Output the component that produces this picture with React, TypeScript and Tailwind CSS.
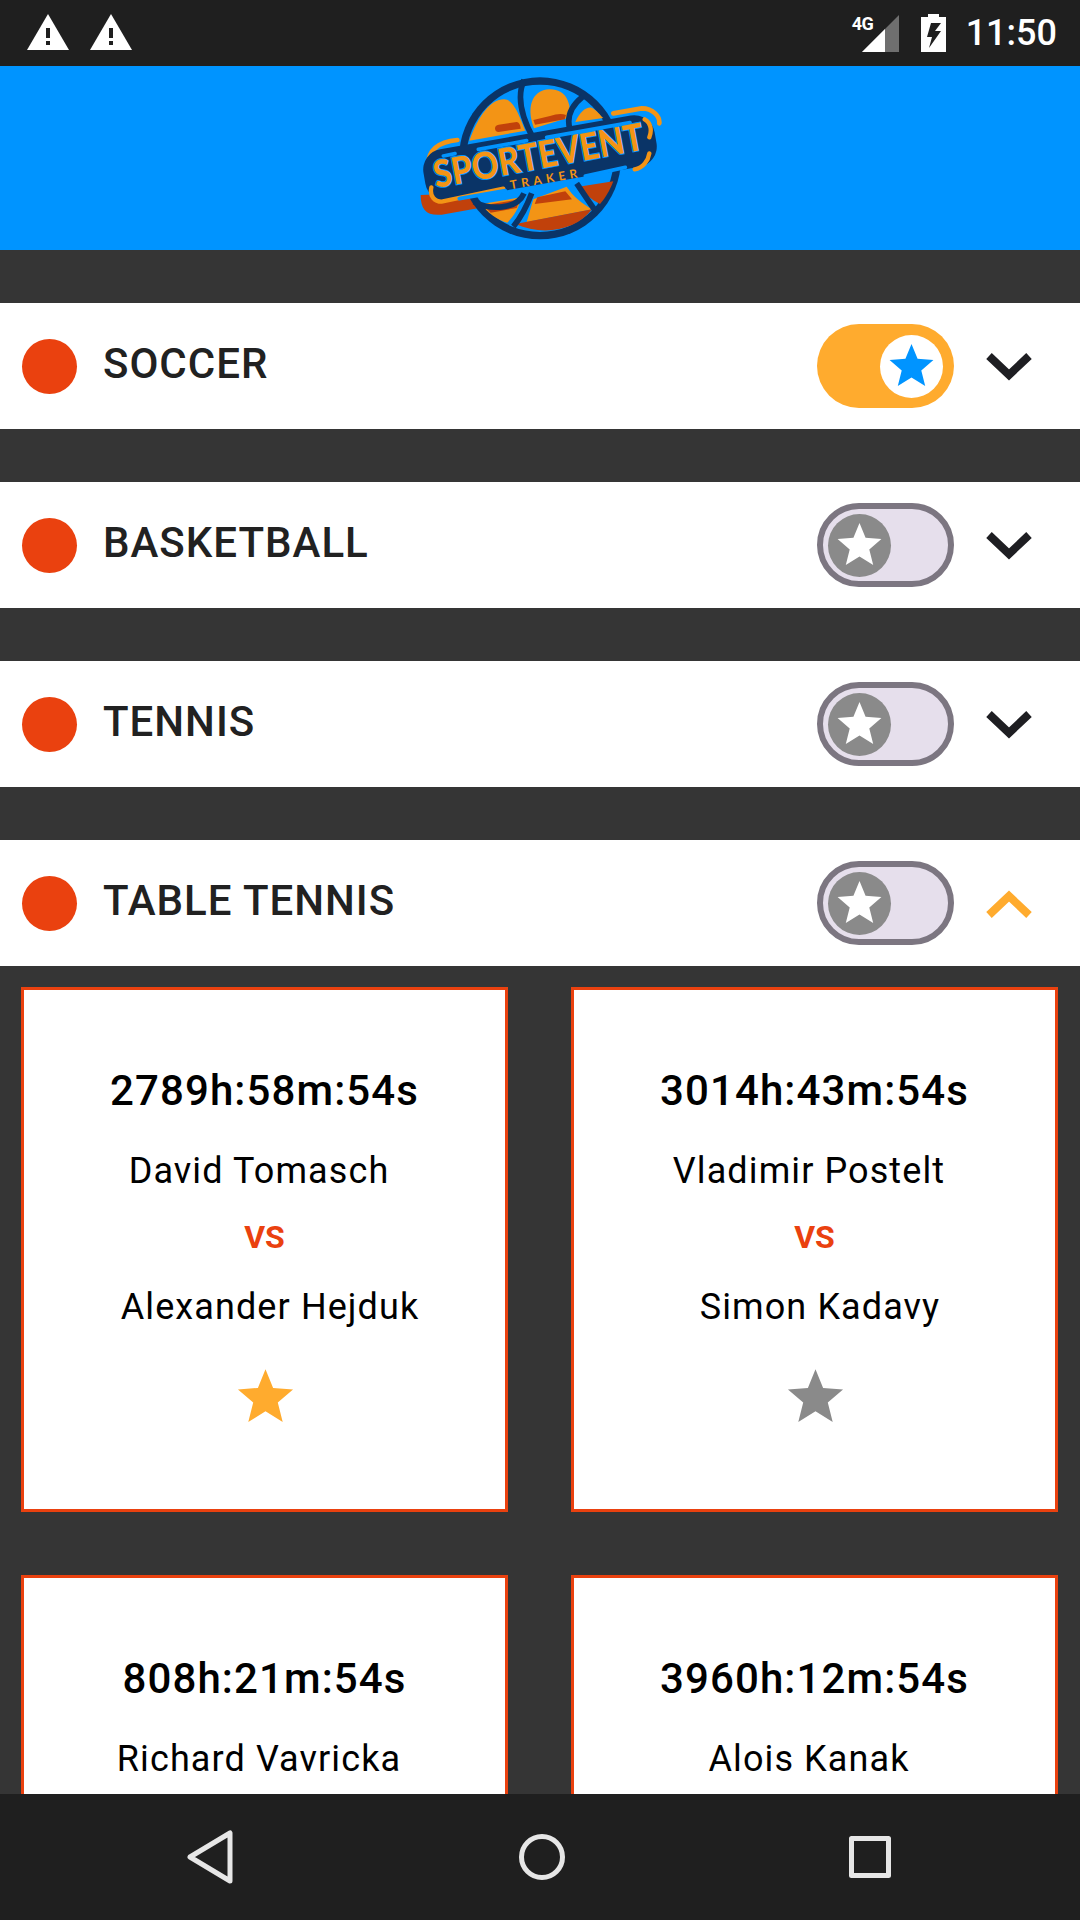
import React from 'react';

const sports = [
  { name: 'SOCCER', on: true, open: false },
  { name: 'BASKETBALL', on: false, open: false },
  { name: 'TENNIS', on: false, open: false },
  { name: 'TABLE TENNIS', on: false, open: true },
];

const matches = [
  { time: '2789h:58m:54s', a: 'David Tomasch', b: 'Alexander Hejduk', fav: true },
  { time: '3014h:43m:54s', a: 'Vladimir Postelt', b: 'Simon Kadavy', fav: false },
  { time: '808h:21m:54s', a: 'Richard Vavricka', b: 'Simon Kadavy', fav: false },
  { time: '3960h:12m:54s', a: 'Alois Kanak', b: 'David Tomasch', fav: false },
];

const Star = ({ className }: { className?: string }) => (
  <svg className={className} viewBox="0 0 24 24" fill="currentColor">
    <path d="M12 .5 15.1 8.1 23.2 8.7 17 14 19 22 12 17.6 5 22 7 14 .8 8.7 8.9 8.1Z" />
  </svg>
);

const Warning = () => (
  <svg className="h-[36px] w-[42px]" viewBox="0 0 42 36">
    <path d="M21 0 42 36H0Z" fill="#fff" />
    <rect x="19" y="14" width="4" height="10" fill="#1f1f1f" />
    <rect x="19" y="27" width="4" height="4" fill="#1f1f1f" />
  </svg>
);

const StatusBar = () => (
  <div className="flex h-[66px] shrink-0 items-center justify-between bg-[#1f1f1f] pl-[27px] pr-[23px]">
    <div className="flex items-center gap-[21px] pb-[3px]">
      <Warning />
      <Warning />
    </div>
    <div className="flex items-center">
      <div className="relative mr-[22px] h-[38px] w-[46px]">
        <svg className="absolute bottom-0 right-0 h-[37px] w-[37px]" viewBox="0 0 37 37">
          <path d="M37 0V37H0Z" fill="#6f6f6f" />
          <path d="M23 14V37H0Z" fill="#fff" />
        </svg>
        <span className="absolute left-[-1px] top-[1px] text-[18px] font-bold leading-[18px] tracking-[-0.5px] text-white">4G</span>
      </div>
      <svg className="mr-[20px] h-[38px] w-[25px]" viewBox="0 0 25 38">
        <path d="M7 0H18V3H25V38H0V3H7Z" fill="#fff" />
        <path d="M20 9H10L6 23H11L8 34 20 17H14Z" fill="#1f1f1f" />
      </svg>
      <span className="text-[36px] font-medium leading-none text-white">11:50</span>
    </div>
  </div>
);

const Logo = () => (
  <svg className="h-[184px] w-[280px]" viewBox="0 18 840 552">
    {/* shadow under the band */}
    <path d="M62 405C62 450 80 468 125 464L250 442 200 400Z" fill="#c1410b" />
    <circle cx="420" cy="295" r="243" fill="#0a3467" />
    <circle cx="420" cy="295" r="221" fill="#0094ff" />
    {/* ball panels */}
    <path d="M208 242C235 170 270 118 312 118 342 118 358 170 376 212Z" fill="#f39415" />
    <path d="M402 205C380 150 390 90 450 88 500 88 512 130 510 172Z" fill="#f39415" />
    <path d="M526 186C540 155 558 140 575 143 590 150 600 165 610 174Z" fill="#f39415" />
    <path d="M285 205Q285 196 296 194L350 186Q360 186 362 206L296 216Q285 216 285 205Z" fill="#c1410b" />
    <path d="M400 180 450 168Q480 158 498 165L494 178 405 194Z" fill="#c1410b" />
    <path d="M245 432 362 412C358 445 340 470 322 488 290 480 262 458 245 432Z" fill="#f39415" />
    <path d="M250 436 360 418 350 444 272 458Z" fill="#c1410b" />
    <path d="M400 418 500 380C520 410 545 430 578 448L380 486Z" fill="#f39415" />
    <path d="M404 432 412 412 496 394 516 418Z" fill="#c1410b" />
    <path d="M346 492 576 448C530 510 430 530 346 492Z" fill="#c1410b" />
    <path d="M536 380 640 364C628 395 615 415 600 432 570 415 550 400 536 380Z" fill="#c1410b" />
    {/* seams */}
    <path d="M372 60C345 120 375 190 400 235M548 110C510 140 500 175 510 210M222 425C270 450 350 450 372 400M395 400C380 440 365 470 340 500M530 370C550 400 570 430 590 458" fill="none" stroke="#0a3467" strokeWidth="17" />
    {/* band */}
    <path d="M84 315C85 265 120 245 172 240M640 160 725 145C760 145 780 170 778 190" stroke="#f39415" strokeWidth="14" strokeLinecap="round" fill="none" />
    <rect x="68" y="216" width="704" height="156" rx="62" fill="#0a3467" transform="rotate(-10 420 294)" />
    <path d="M94 382C88 410 105 425 125 425L310 386M704 328C730 325 745 300 748 280M734 178C755 190 755 215 748 232" stroke="#f39415" strokeWidth="13" strokeLinecap="round" fill="none" />
    {/* blue dashes */}
    <path d="M130 288 165 281M235 268 380 242M440 232 690 188M178 416 316 392M556 348 676 322" stroke="#0094ff" strokeWidth="11" strokeLinecap="round" fill="none" />
    <text x="108" y="384" transform="rotate(-10.5 108 384)" textLength="640" lengthAdjust="spacingAndGlyphs" fontFamily="Lato, sans-serif" fontWeight="900" fontSize="112" fill="#f39415" stroke="#0094ff" strokeWidth="6" paintOrder="stroke">SPORTEVENT</text>
    <text x="332" y="388" transform="rotate(-10 332 388)" textLength="205" fontFamily="Lato, sans-serif" fontWeight="700" fontSize="36" fill="#f39415">TRAKER</text>
  </svg>
);

const Toggle = ({ on }: { on: boolean }) =>
  on ? (
    <div className="flex h-[84px] w-[137px] items-center justify-end rounded-full bg-[#ffab2e] pr-[11px]">
      <div className="flex h-[63px] w-[63px] items-center justify-center rounded-full bg-white">
        <Star className="h-[47px] w-[47px] text-[#0094ff]" />
      </div>
    </div>
  ) : (
    <div className="flex h-[84px] w-[137px] items-center rounded-full border-[6px] border-[#7c7681] bg-[#e6dfec] pl-[5px]">
      <div className="flex h-[63px] w-[63px] items-center justify-center rounded-full bg-[#8a8a8a]">
        <Star className="h-[47px] w-[47px] text-white" />
      </div>
    </div>
  );

const Chevron = ({ open }: { open: boolean }) => (
  <svg className="h-[28px] w-[46px]" viewBox="0 0 46 28" fill="none" strokeWidth="8" stroke={open ? '#ffab2e' : '#1e1e22'}>
    <path d={open ? 'M3 25 23 6 43 25' : 'M3 3 23 22 43 3'} />
  </svg>
);

const SportRow = ({ name, on, open }: { name: string; on: boolean; open: boolean }) => (
  <div className="flex h-[126px] items-center bg-white pl-[22px] pr-[48px]">
    <div className="h-[55px] w-[55px] rounded-full bg-[#ea410f]" />
    <span className="ml-[26px] flex-1 pb-[5px] text-[42px] font-medium tracking-[1px] text-[#212121]">{name}</span>
    <div className="ml-[1px]">
      <Toggle on={on} />
    </div>
    <div className="ml-[32px] pt-[2px]">
      <Chevron open={open} />
    </div>
  </div>
);

const MatchCard = ({ time, a, b, fav }: { time: string; a: string; b: string; fav: boolean }) => (
  <div className="flex h-[525px] flex-col items-center border-[3px] border-[#ea410f] bg-white text-black">
    <div className="mt-[71px] text-[42px] font-medium leading-[60px] tracking-[1.1px]">{time}</div>
    <div className="mt-[20px] pr-[11px] text-[36px] leading-[60px] tracking-[1.1px]">{a}</div>
    <div className="mt-[6px] text-[32px] font-bold leading-[60px] text-[#ea410f]">VS</div>
    <div className="mt-[10px] pl-[11px] text-[36px] leading-[60px] tracking-[1.1px]">{b}</div>
    <Star className={`ml-[2px] mt-[31px] h-[59px] w-[59px] ${fav ? 'text-[#ffab2e]' : 'text-[#8a8a8a]'}`} />
  </div>
);

export default function App() {
  return (
    <div className="flex h-[1920px] w-[1080px] flex-col overflow-hidden bg-[#353535] font-['Roboto',sans-serif]">
      <StatusBar />
      <div className="flex h-[184px] shrink-0 items-center justify-center bg-[#0094ff]">
        <Logo />
      </div>
      <div className="min-h-0 flex-1 overflow-hidden">
        <div className="flex flex-col gap-[53px] pt-[53px]">
          {sports.map((s) => (
            <SportRow key={s.name} {...s} />
          ))}
        </div>
        <div className="grid grid-cols-[487px_487px] gap-x-[63px] gap-y-[63px] px-[21px] pt-[21px]">
          {matches.map((m) => (
            <MatchCard key={m.time} {...m} />
          ))}
        </div>
      </div>
      <div className="flex h-[126px] shrink-0 items-center bg-[#1f1f1f] pl-[186px] pr-[189px]">
        <div className="flex w-full items-center justify-between">
          <svg className="h-[54px] w-[48px]" viewBox="0 0 48 54" fill="none" stroke="#e6e6e6" strokeWidth="5" strokeLinejoin="round">
            <path d="M44 3V51L4 27Z" />
          </svg>
          <svg className="h-[46px] w-[46px]" viewBox="0 0 46 46" fill="none" stroke="#e6e6e6" strokeWidth="5">
            <circle cx="23" cy="23" r="20.5" />
          </svg>
          <svg className="h-[42px] w-[42px]" viewBox="0 0 42 42" fill="none" stroke="#e6e6e6" strokeWidth="5" strokeLinejoin="round">
            <rect x="2.5" y="2.5" width="37" height="37" />
          </svg>
        </div>
      </div>
    </div>
  );
}
